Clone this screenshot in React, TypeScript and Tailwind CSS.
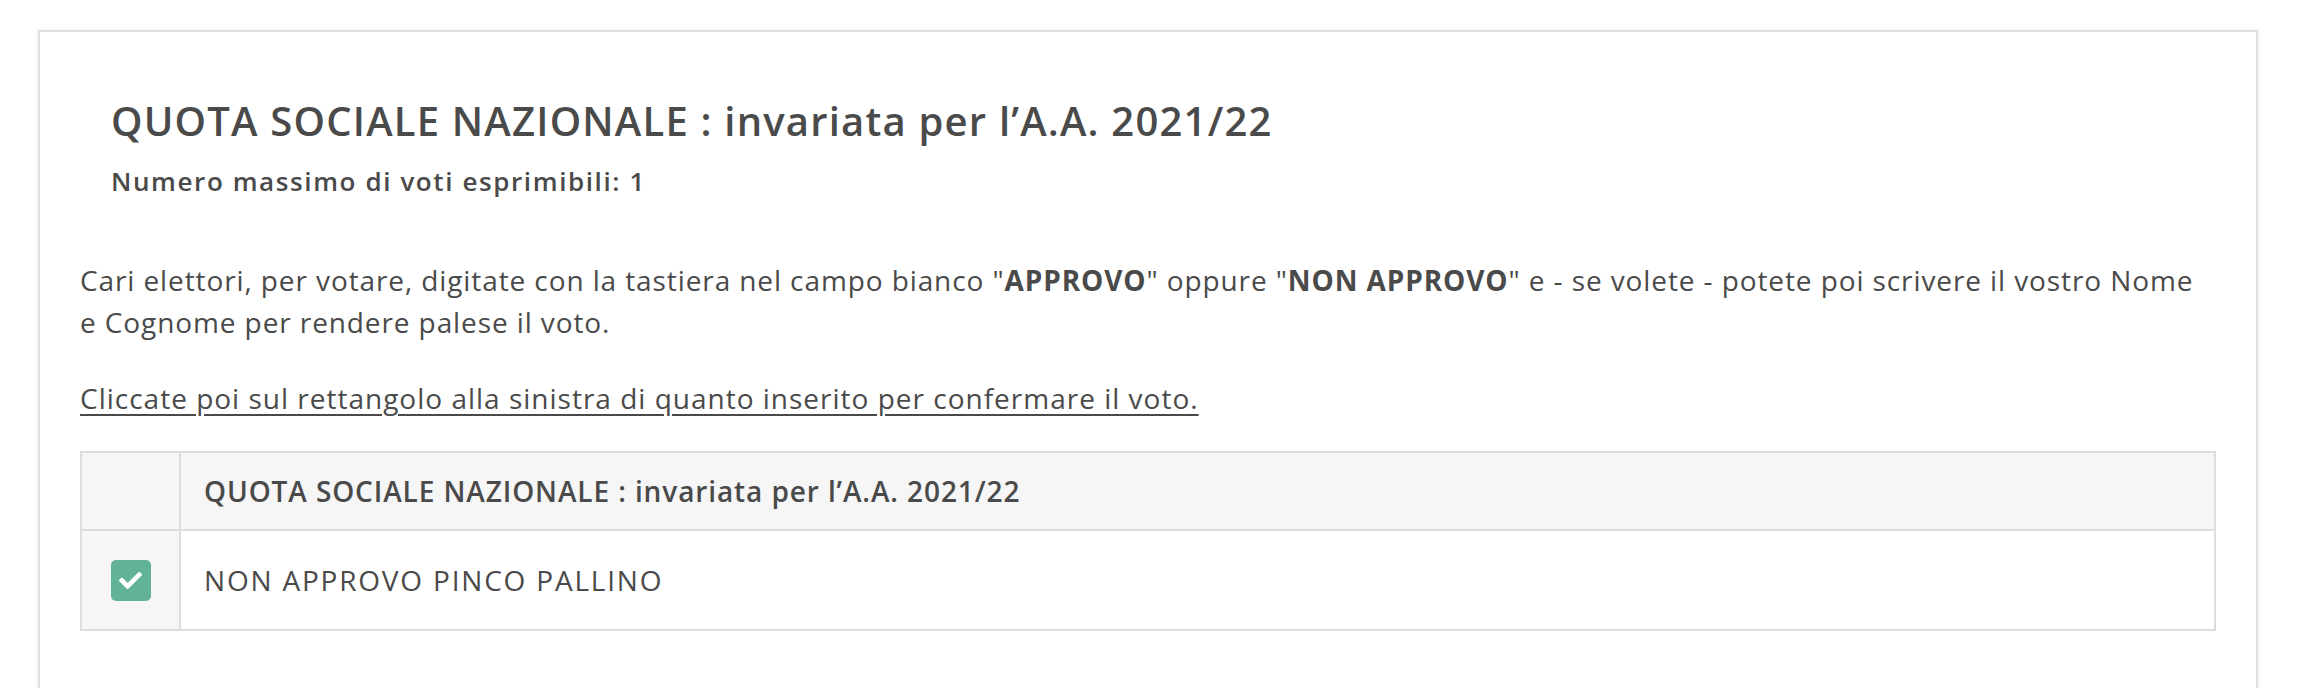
import React from "react";
import { FaCheck } from "react-icons/fa";

const App = () => {
  return (
    <div className="w-[2316px] h-[688px] bg-white overflow-hidden text-[#4a4a4a] font-['Open_Sans',sans-serif]">
      <div className="ml-[38px] mt-[30px] w-[2220px] h-[700px] border-2 border-[#e1e1e1] shadow-[0_0_6px_rgba(0,0,0,0.06)] px-[40px]">
        <div className="pl-[31px] pt-[65px]">
          <h1 className="text-[40px] leading-[48px] font-semibold tracking-[1.2px]">
            QUOTA SOCIALE NAZIONALE : invariata per l’A.A. 2021/22
          </h1>
          <h2 className="mt-[17px] text-[26px] leading-[39px] font-semibold tracking-[1.6px]">
            Numero massimo di voti esprimibili: 1
          </h2>
        </div>
        <p className="mt-[58px] pr-[12px] text-[28px] leading-[42px] tracking-[0.9px]">
          Cari elettori, per votare, digitate con la tastiera nel campo bianco "<b className="font-bold">APPROVO</b>" oppure "
          <b className="font-bold">NON APPROVO</b>" e - se volete - potete poi scrivere il vostro Nome e Cognome per rendere palese il voto.
        </p>
        <p className="mt-[34px] text-[28px] leading-[42px] tracking-[1px] underline underline-offset-[5px]">
          Cliccate poi sul rettangolo alla sinistra di quanto inserito per confermare il voto.
        </p>
        <div className="mt-[32px] border-2 border-[#dddddd] text-[28px]">
          <div className="flex h-[78px] bg-[#f6f6f6] border-b-2 border-[#dddddd]">
            <div className="w-[99px] border-r-2 border-[#dddddd]" />
            <div className="flex items-center pl-[23px] font-semibold tracking-[0.9px]">
              QUOTA SOCIALE NAZIONALE : invariata per l’A.A. 2021/22
            </div>
          </div>
          <div className="flex h-[98px]">
            <div className="w-[99px] bg-[#f6f6f6] border-r-2 border-[#dddddd] flex items-center justify-center">
              <div className="w-[40px] h-[41px] rounded-[5px] bg-[#62b396] flex items-center justify-center">
                <FaCheck className="w-[23px] h-[23px] text-white" />
              </div>
            </div>
            <div className="flex items-center pl-[23px] tracking-[1.8px]">NON APPROVO PINCO PALLINO</div>
          </div>
        </div>
      </div>
    </div>
  );
};

export default App;
